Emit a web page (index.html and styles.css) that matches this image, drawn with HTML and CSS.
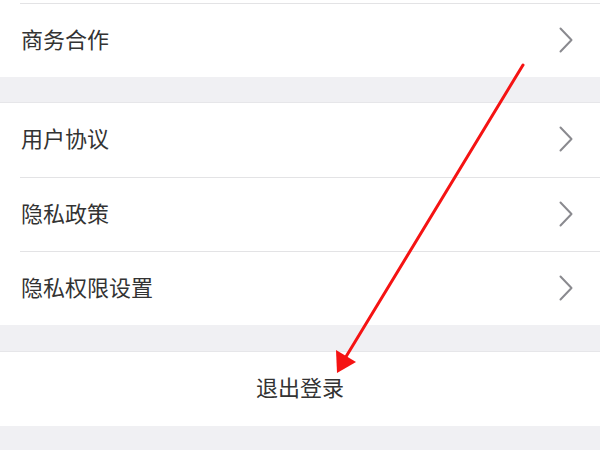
FILE: index.html
```html
<!DOCTYPE html>
<html lang="zh-CN">
<head>
    <meta charset="UTF-8">
    <meta name="viewport" content="width=device-width, initial-scale=1.0">
    <title>设置</title>
    <link rel="stylesheet" href="styles.css">
</head>
<body>
<div id="page">
    <div class="group">
        <div class="cut"></div>
        <div class="row line">
            <span class="label">商务合作</span>
            <svg class="chevron" width="14" height="26" viewBox="0 0 14 26"><polyline points="1.5,1.5 12.5,13 1.5,24.5"/></svg>
        </div>
    </div>
    <div class="gap"></div>
    <div class="group">
        <div class="row first">
            <span class="label">用户协议</span>
            <svg class="chevron" width="14" height="26" viewBox="0 0 14 26"><polyline points="1.5,1.5 12.5,13 1.5,24.5"/></svg>
        </div>
        <div class="row line">
            <span class="label">隐私政策</span>
            <svg class="chevron" width="14" height="26" viewBox="0 0 14 26"><polyline points="1.5,1.5 12.5,13 1.5,24.5"/></svg>
        </div>
        <div class="row line">
            <span class="label">隐私权限设置</span>
            <svg class="chevron" width="14" height="26" viewBox="0 0 14 26"><polyline points="1.5,1.5 12.5,13 1.5,24.5"/></svg>
        </div>
    </div>
    <div class="gap last"></div>
    <div class="group">
        <div class="row logout first"><span class="label">退出登录</span></div>
    </div>
    <div class="gap"></div>

    <!-- 红色箭头标注 -->
    <svg id="arrow" width="600" height="450" viewBox="0 0 600 450">
        <line x1="523" y1="65" x2="344" y2="360" stroke="#f51313" stroke-width="3" stroke-linecap="round"/>
        <polygon points="337,373 336,350 356,362" fill="#f51313"/>
    </svg>
</div>
</body>
</html>
```
FILE: styles.css
```css
html,
body {
    margin: 0;
    padding: 0;
    background: #f0f0f3;
}
#page {
    position: relative;
    width: 600px;
    height: 450px;
    overflow: hidden;
    font-family: "Noto Sans CJK SC", "Noto Sans", sans-serif;
    color: #333333;
}
.group {
    background: #ffffff;
}
.cut {
    height: 3px;
}
.row {
    position: relative;
    display: flex;
    align-items: center;
    justify-content: space-between;
    height: 73px;
    padding: 0 27px 0 21px;
    font-size: 22px;
}
.row.first {
    height: 74px;
}
.row.line {
    border-top: 1px solid transparent;
}
.row.line::before {
    content: "";
    position: absolute;
    left: 20px;
    right: 0;
    top: -1px;
    height: 1px;
    background: #e3e3e5;
}
.label {
    line-height: 1;
    margin-bottom: 6px;
}
.chevron {
    fill: none;
    stroke: #8a8a8f;
    stroke-width: 2;
    stroke-linecap: round;
    stroke-linejoin: round;
    margin-bottom: 2px;
}
.gap {
    height: 26px;
    border-bottom: 1px solid #e6e6e9;
    box-sizing: border-box;
}
.gap.last {
    height: 27px;
}
.logout {
    justify-content: center;
    padding: 0;
    height: 73px;
}
#arrow {
    position: absolute;
    left: 0;
    top: 0;
}
```
